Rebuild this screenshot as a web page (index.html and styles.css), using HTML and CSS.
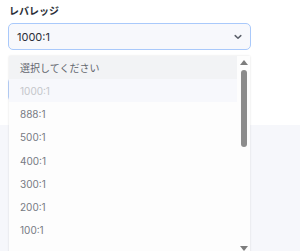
FILE: index.html
```html
<!DOCTYPE html>
<html lang="ja">
<head>
    <meta charset="UTF-8">
    <title>レバレッジ</title>
    <link rel="stylesheet" href="styles.css">
</head>
<body>
    <div class="page">
        <div class="field">
            <label class="field-label">レバレッジ</label>
            <div class="select">
                <span>1000:1</span>
                <svg class="chevron" width="8" height="6" viewBox="0 0 8 6">
                    <path d="M1.2 1.6 L4 4.3 L6.8 1.6" fill="none" stroke="#5d626c" stroke-width="1.5" stroke-linecap="round" stroke-linejoin="round"/>
                </svg>
            </div>
        </div>
        <div class="under">
            <div class="under-input"></div>
        </div>
        <div class="panel"></div>

        <div class="dropdown">
            <div class="options">
                <div class="option placeholder">選択してください</div>
                <div class="option selected">1000:1</div>
                <div class="option">888:1</div>
                <div class="option">500:1</div>
                <div class="option">400:1</div>
                <div class="option">300:1</div>
                <div class="option">200:1</div>
                <div class="option">100:1</div>
            </div>
            <div class="scrollbar">
                <div class="arrow up"></div>
                <div class="thumb"></div>
                <div class="track"></div>
                <div class="arrow down"></div>
            </div>
        </div>
    </div>
</body>
</html>
```
FILE: styles.css
```css
body, html {
    margin: 0;
    padding: 0;
    background-color: #ffffff;
    font-family: "Inter", "Noto Sans CJK JP", sans-serif;
    overflow: hidden;
}

.page {
    position: relative;
    height: 251px;
    overflow: hidden;
}

.field {
    padding: 5px 8px 0 8px;
}

.field-label {
    display: block;
    font-size: 10px;
    font-weight: 700;
    color: #2b2f38;
    line-height: 13px;
    padding-left: 1px;
    margin-bottom: 5px;
}

.select {
    width: 243px;
    height: 27px;
    box-sizing: border-box;
    display: flex;
    align-items: center;
    justify-content: space-between;
    padding: 0 8px 0 8px;
    border: 1px solid #a9c9fb;
    border-radius: 5px;
    background-color: #f7f8fc;
    font-size: 11px;
    color: #2b2f38;
}

.chevron {
    display: block;
}

.under {
    height: 75px;
    padding: 28px 0 0 8px;
    box-sizing: border-box;
}

.under-input {
    width: 240px;
    height: 23px;
    border: 1px solid #b9d2fb;
    border-radius: 4px;
    box-sizing: border-box;
}

.panel {
    height: 130px;
    background-color: #f6f7fb;
}

.dropdown {
    position: absolute;
    left: 9px;
    top: 56px;
    width: 241px;
    height: 200px;
    display: flex;
    background-color: #fdfdfd;
    box-shadow: 0 0 2px rgba(0, 0, 0, 0.12);
}

.options {
    flex: 1;
}

.option {
    height: 23.3px;
    display: flex;
    align-items: center;
    padding-left: 11px;
    font-size: 10px;
    color: #767a83;
}

.option.placeholder {
    background-color: #f2f3f5;
    color: #62666e;
    height: 23px;
}

.option.selected {
    background-color: #f7f8fc;
    color: #c4c6ca;
}

.scrollbar {
    width: 13px;
    display: flex;
    flex-direction: column;
    align-items: center;
    background-color: #fdfdfd;
}

.arrow {
    width: 0;
    height: 0;
    border-left: 4px solid transparent;
    border-right: 4px solid transparent;
}

.arrow.up {
    margin-top: 4px;
    border-bottom: 5px solid #7d7d7d;
}

.arrow.down {
    margin-bottom: 5px;
    border-top: 5px solid #7d7d7d;
}

.thumb {
    width: 6px;
    height: 77px;
    margin-top: 5px;
    border-radius: 3px;
    background-color: #8c8c8c;
}

.track {
    flex: 1;
}
```
